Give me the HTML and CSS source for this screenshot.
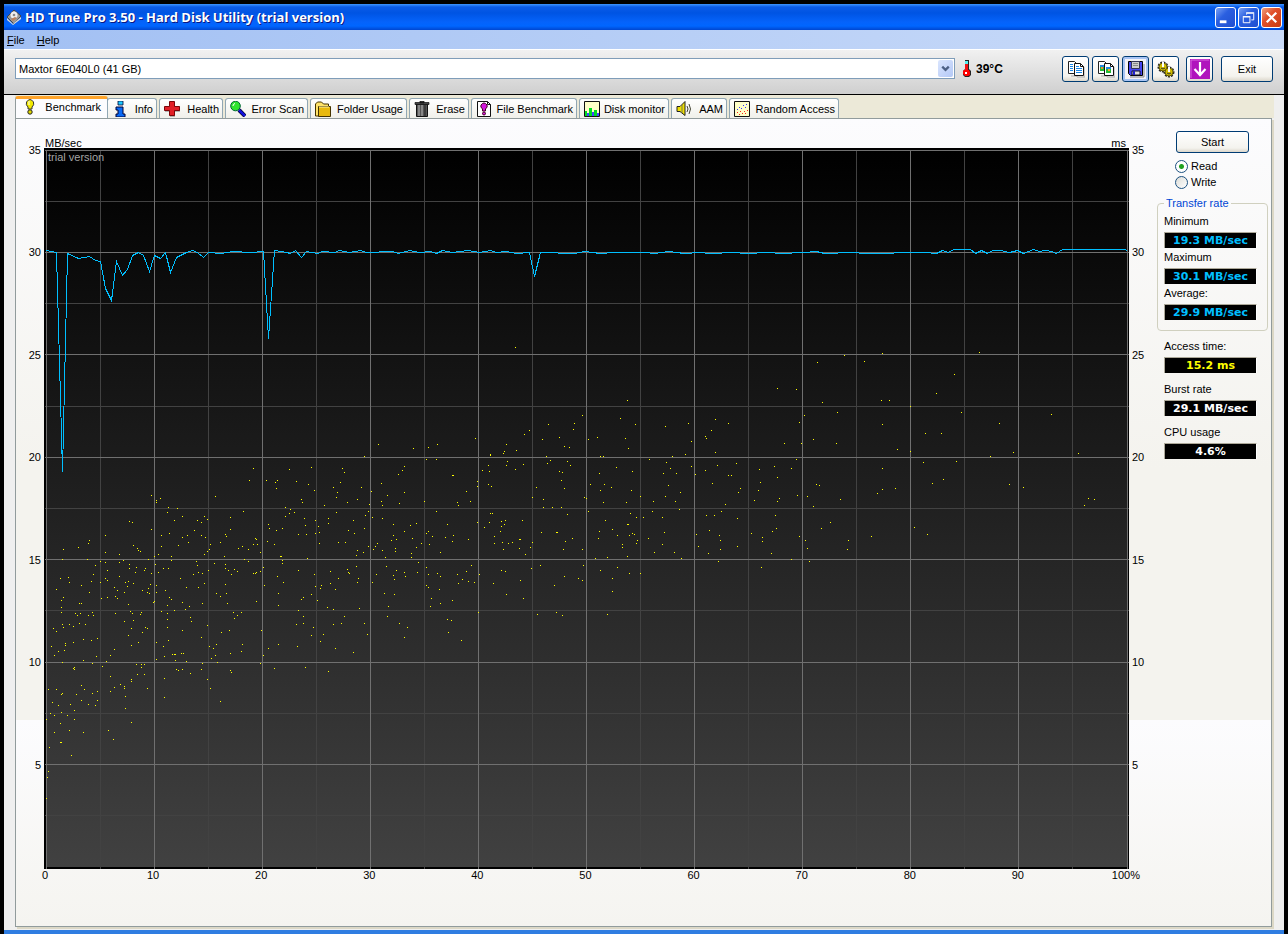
FILE: index.html
```html
<!DOCTYPE html>
<html lang="en">
<head>
<meta charset="utf-8">
<title>HD Tune Pro 3.50 - Hard Disk Utility (trial version)</title>
<link rel="stylesheet" href="styles.css">
</head>
<body>
<div class="window">
  <header class="titlebar">
    <svg class="icon" viewBox="0 0 16 16"><path d="M1 8 8 1l7 6-7 8z" fill="#999" stroke="#444"/><path d="m1 9 6 6 8-7v2l-8 6-6-5z" fill="#ddd"/><circle cx="8" cy="6" r="3.500" fill="#eee"/><circle cx="8" cy="6" r="1.300" fill="#888"/><path d="m5 10 4-2 2 1-4 3z" fill="#b9805d"/></svg>
    <h1 class="title">HD Tune Pro 3.50 - Hard Disk Utility (trial version)</h1>
    <button class="winbtn" aria-label="Minimize"><svg viewBox="0 0 20 20"><path d="M4 13h7v3H4z" fill="#fff"/></svg></button>
    <button class="winbtn" aria-label="Restore"><svg viewBox="0 0 20 20" fill="none" stroke="#fff"><path d="M8 7V5.500h7.500v7H13M7.500 5h8.500" /><path d="M4.500 9.500h7v6h-7zM4 9h8"/></svg></button>
    <button class="winbtn close" aria-label="Close"><svg viewBox="0 0 20 20"><path d="m5 5 10 10M15 5 5 15" stroke="#fff" stroke-width="2.400"/></svg></button>
  </header>
  <nav class="menubar"><button><u>F</u>ile</button><button><u>H</u>elp</button></nav>
  <div class="toolbar">
    <div class="drive">
      <select class="drive-select" aria-label="Drive"><option>Maxtor 6E040L0 (41 GB)</option></select>
      <svg class="drive-arrow" viewBox="0 0 16 18"><path d="m4.500 7 3.500 3.500L11.500 7" fill="none" stroke="#4d6185" stroke-width="2.400"/></svg>
    </div>
    <div class="temp">
      <svg class="thermo" viewBox="0 0 10 18"><path d="M3 0h4v9l2 2v4l-2 2H3l-2-2v-4l2-2z" fill="#222"/><path d="M3 1h3v9H3z" fill="#f01010"/><path d="M3 1h3v3H3z" fill="#5ee"/><path d="M2 10h5l1 2v3l-2 1H3l-2-2v-3z" fill="#f00"/><path d="M3 12h2v2H3z" fill="#fff"/></svg>
      <span>39°C</span>
    </div>
    <div class="tools">
      <button class="xpbtn tool" aria-label="Copy information"><svg viewBox="0 0 18 18"><path d="M4 16h6v1h8V7" fill="none" stroke="#aaa"/><path d="M1.500 1.500h6l2 2v10h-8z" fill="#fff" stroke="#222"/><path d="M7.500 3.500h6l3 3v9h-9z" fill="#fff" stroke="#111"/><path d="M13.500 3.500v3h3" fill="none" stroke="#111"/><path d="M3 4.500h3M3 6.500h3M3 8.500h3M3 10.500h3M9 6.500h3M9 8.500h6M9 10.500h6M9 12.500h6" stroke="#1887e8"/></svg></button>
      <button class="xpbtn tool" aria-label="Copy screenshot"><svg viewBox="0 0 18 18"><path d="M4 16h6v1h8V7" fill="none" stroke="#aaa"/><path d="M1.500 1.500h6l2 2v10h-8z" fill="#fff" stroke="#222"/><path d="M3 5h4v6H3z" fill="#2b3"/><path d="M3 5h4v2H3z" fill="#28d"/><path d="M4 7h2v2H4z" fill="#e83"/><path d="M7.500 3.500h6l3 3v9h-9z" fill="#fff" stroke="#111"/><path d="M13.500 3.500v3h3" fill="none" stroke="#111"/><path d="M9 7h5v6H9z" fill="#2b3"/><path d="M9 7h5v2H9z" fill="#28d"/><path d="M11 9h2v2h-2z" fill="#fa2"/></svg></button>
      <button class="xpbtn tool active" aria-label="Save screenshot"><svg viewBox="0 0 18 18"><path d="M3 17h14V4" fill="none" stroke="#888"/><path d="M1.500 1.500h14v14H3.500l-2-2z" fill="#4646f0" stroke="#000"/><path d="M4.500 1.500h8v7h-8z" fill="#ccc" stroke="#335"/><path d="M6 3.500h5M6 5.500h5" stroke="#888"/><path d="M5 11h8v4H5z" fill="#ddd" stroke="#112"/><path d="M6 11h2v4H6z" fill="#22c"/></svg></button>
      <button class="xpbtn tool" aria-label="Options"><svg viewBox="0 0 18 18"><g fill="none" stroke="#222" stroke-width="2" stroke-dasharray="2 1"><circle cx="6" cy="7" r="4.500"/><circle cx="12" cy="12" r="4.500"/></g><circle cx="6" cy="7" r="4" fill="#d0bd00" stroke="#665c00"/><circle cx="12" cy="12" r="4" fill="#d0bd00" stroke="#665c00"/><path d="M6 2v5M12 7v5" stroke="#fff" stroke-width="2"/><path d="M4 8q2 2 4 0M10 13q2 2 4 0" stroke="#333" fill="none"/></svg></button>
      <button class="xpbtn tool down" aria-label="Minimize to tray"><svg viewBox="0 0 20 20"><path d="M0 0h20v20H0z" fill="#b013bd"/><path d="M1 19V1h18" stroke="#d768df" fill="none"/><path d="M10 3v12M4.500 10l5.500 6 5.500-6" fill="none" stroke="#fff" stroke-width="2.200"/></svg></button>
      <button class="xpbtn exit">Exit</button>
    </div>
  </div>
  <main class="body">
    <div class="tabs" role="tablist">
      <button class="tab t-bench selected" role="tab" aria-selected="true"><svg class="icon" viewBox="0 0 16 16"><path d="M4.500 3q3.500-5 7 0 1 3-1.500 5v2H6V8Q3.500 6 4.500 3z" fill="#f1e900" stroke="#333"/><circle cx="8" cy="13" r="2.200" fill="#e0d800" stroke="#222"/><path d="M7 2v4" stroke="#fff"/></svg>Benchmark</button>
      <button class="tab t-info" role="tab"><svg class="icon" viewBox="0 0 16 16"><path d="M6 0h5v4H6z" fill="#19c8ff" stroke="#003" stroke-width=".8"/><path d="M4 6h7v7h2v3H4v-3h2V9H4z" fill="#0869f5" stroke="#003" /></svg>Info</button>
      <button class="tab t-health" role="tab"><svg class="icon" viewBox="0 0 16 16"><path d="M6 1.500h5v4h5v5h-5v5H6v-5H1v-5h5z" fill="#777"/><path d="M5.500.5h5v5h5v4h-5v5h-5v-5h-5v-4h5z" fill="#e11f26" stroke="#7c0508"/></svg>Health</button>
      <button class="tab t-scan" role="tab"><svg class="icon" viewBox="0 0 16 16"><path d="m9 9 6 6" stroke="#002" stroke-width="4"/><path d="m9 9 6 6" stroke="#11d" stroke-width="2.500"/><circle cx="5.500" cy="5" r="4.800" fill="#2fe52f" stroke="#063"/><path d="M3 5q0-2 2-2.500" stroke="#fff" fill="none"/></svg>Error Scan</button>
      <button class="tab t-folder" role="tab"><svg class="icon" viewBox="0 0 16 16"><path d="M.5 14V3l2-2h4l2 2h5v12h-13z" fill="#ffe36a" stroke="#443300"/><path d="M3.500 5.500h12v10h-12z" fill="#e8b90e" stroke="#443300"/><path d="M4 6h10" stroke="#fff3a0"/></svg>Folder Usage</button>
      <button class="tab t-erase" role="tab"><svg class="icon" viewBox="0 0 16 16"><path d="M2.500 3h11v12.500h-11z" fill="#555" stroke="#111"/><path d="M1 1.500h14v2H1zM6 0h4v2H6z" fill="#444" stroke="#111" stroke-width=".7"/><path d="M5 4v11M8 4v11" stroke="#bbb"/><path d="M11 4v11" stroke="#222"/></svg>Erase</button>
      <button class="tab t-file" role="tab"><svg class="icon" viewBox="0 0 16 16"><path d="M1.500.5h10l3 3v12h-13z" fill="#fff" stroke="#111"/><path d="M11.500.5v3h3" fill="none" stroke="#111"/><path d="M5 4q3-4 6 0 1 2-1.500 4v2h-3V8Q4 6 5 4z" fill="#d216dc" stroke="#402"/><circle cx="8" cy="12.500" r="1.500" fill="#d216dc" stroke="#402"/></svg>File Benchmark</button>
      <button class="tab t-monitor" role="tab"><svg class="icon" viewBox="0 0 16 16"><path d="M.5.500h15v15H.5z" fill="#ffffc8" stroke="#111"/><path d="M1 10h2v5H1zM5 7h3v8H5zM10 9h3v6h-3z" fill="#0d2"/><path d="M3 12h2v3H3zM8 11h2v4H8zM13 12h2v3h-2z" fill="#44f"/></svg>Disk monitor</button>
      <button class="tab t-aam" role="tab"><svg class="icon" viewBox="0 0 16 16"><path d="M1 5.500h3l5-5v14l-5-4H1z" fill="#f0e000" stroke="#222"/><path d="M6 4v8" stroke="#775"/><path d="M11 5q2 3 0 6M13 3q3 5 0 10" fill="none" stroke="#443"/></svg>AAM</button>
      <button class="tab t-random" role="tab"><svg class="icon" viewBox="0 0 16 16"><path d="M.5.500h15v15H.5z" fill="#ffffc8" stroke="#111"/><path d="M3 11h1v1H3zM5 13h1v1H5zM6 10h1v1H6zM8 12h1v1H8zM10 10h1v1h-1zM11 12h1v1h-1zM13 9h1v1h-1z" fill="#f22"/><path d="M3 8h1v1H3zM5 6h1v1H5zM7 7h1v1H7zM9 4h1v1H9zM12 3h1v1h-1zM11 6h1v1h-1z" fill="#33f"/></svg>Random Access</button>
    </div>
    <section class="panel" role="tabpanel">
      <div class="chart">
        <div class="units"><span>MB/sec</span><span>ms</span></div>
        <div class="axis-y left"><span>35</span><span>30</span><span>25</span><span>20</span><span>15</span><span>10</span><span>5</span><span></span></div>
        <div class="plot">
          <svg id="plot" viewBox="0 0 1085 721" preserveAspectRatio="none" role="img" aria-label="Transfer rate and access time">
            <defs><linearGradient id="shade" x2="0" y2="1"><stop offset="0" stop-color="#000"/><stop offset="1" stop-color="#414141"/></linearGradient></defs>
            <rect width="1085" height="721" fill="#000"/>
            <rect x="2" y="2" width="1081" height="717" fill="url(#shade)"/>
            <path id="minor" class="minor"/>
            <path id="major" class="major"/>
            <path id="dots" class="dots"/>
            <polyline id="rate" class="rate"/>
          </svg>
          <span class="trial">trial version</span>
        </div>
        <div class="axis-y right"><span>35</span><span>30</span><span>25</span><span>20</span><span>15</span><span>10</span><span>5</span><span></span></div>
        <div class="axis-x"><span>0</span><span>10</span><span>20</span><span>30</span><span>40</span><span>50</span><span>60</span><span>70</span><span>80</span><span>90</span><span>100%</span></div>
      </div>
      <aside class="side">
        <button class="xpbtn start">Start</button>
        <div class="modes">
          <label><input type="radio" name="mode" checked>Read</label>
          <label><input type="radio" name="mode">Write</label>
        </div>
        <fieldset class="rates">
          <legend>Transfer rate</legend>
          <div class="stat"><span>Minimum</span><output class="cyan">19.3 MB/sec</output></div>
          <div class="stat"><span>Maximum</span><output class="cyan">30.1 MB/sec</output></div>
          <div class="stat"><span>Average:</span><output class="cyan">29.9 MB/sec</output></div>
        </fieldset>
        <div class="others">
          <div class="stat"><span>Access time:</span><output class="yellow">15.2 ms</output></div>
          <div class="stat"><span>Burst rate</span><output>29.1 MB/sec</output></div>
          <div class="stat"><span>CPU usage</span><output>4.6%</output></div>
        </div>
      </aside>
    </section>
  </main>
</div>
<script src="chart.js"></script>
</body>
</html>
```
FILE: styles.css
```css
* { box-sizing: border-box; }
body {
  margin: 0;
  background: #000;
  color: #000;
  font: 11px/14px "Liberation Sans", Arial, sans-serif;
}
button, select, input { font: inherit; color: inherit; margin: 0; }
button { padding: 0; border: 0; background: none; }
.icon { width: 16px; height: 16px; flex: none; }

.window {
  display: flex;
  flex-direction: column;
  height: 100vh;
  min-height: 640px;
  padding: 4px 4px 0;
}
.titlebar {
  display: flex;
  align-items: center;
  gap: 2px;
  height: 26px;
  flex: none;
  padding: 0 2px;
  background: linear-gradient(#3d95ff 0, #0a5be8 3px, #0054e3 9px, #0563fb 18px, #0066ff 22px, #0046d0 26px);
}
.title {
  flex: 1;
  margin: 0 0 0 1px;
  color: #fff;
  font: bold 13px/20px "Open Sans", sans-serif;
  text-shadow: 1px 1px #0a1883;
}
.winbtn {
  width: 21px;
  height: 21px;
  border: 1px solid #fff;
  border-radius: 3px;
  background: linear-gradient(135deg, #7aa2f5, #2a5fe0 40%, #1f4fd0);
}
.winbtn svg { display: block; width: 19px; height: 19px; }
.winbtn.close { background: linear-gradient(135deg, #f0a080, #e1502a 40%, #c93a10); }

.menubar {
  display: flex;
  gap: 12px;
  height: 20px;
  flex: none;
  padding: 0 3px;
  align-items: center;
  border-bottom: 1px solid #fff;
  background: linear-gradient(90deg, #a2c0f3, #cbdcf9);
}
.toolbar {
  display: flex;
  align-items: center;
  height: 45px;
  flex: none;
  padding: 0 11px 7px;
  background: linear-gradient(#f1f1f1, #cfcfcf);
  border-bottom: 1px solid #000;
}
.drive { position: relative; flex: 1; }
.drive-select {
  display: block;
  appearance: none;
  width: 100%;
  height: 21px;
  padding: 0 20px 0 3px;
  border: 1px solid #7f9db9;
  border-radius: 0;
  background: #fff;
}
.drive-arrow {
  position: absolute;
  right: 2px;
  top: 2px;
  width: 15px;
  height: 17px;
  border-radius: 2px;
  background: linear-gradient(135deg, #dbe6fe, #b3c8f6);
  pointer-events: none;
}
.temp {
  display: flex;
  align-items: center;
  gap: 4px;
  width: 107px;
  padding-left: 7px;
  font-weight: bold;
  font-size: 12px;
}
.thermo { width: 10px; height: 18px; }
.tools { display: flex; gap: 3px; }
.xpbtn {
  border: 1px solid #003c74;
  border-radius: 3px;
  background: linear-gradient(#fff, #f4f3ee 80%, #dcd7cb);
}
.tool {
  display: grid;
  place-items: center;
  width: 27px;
  height: 26px;
}
.tool svg { width: 18px; height: 18px; }
.tool.active { background: #f4f3f8; box-shadow: inset 0 0 0 2px #a8c4f4; }
.tool.down { margin-left: 4px; }
.tool.down svg { width: 20px; height: 20px; }
.exit { width: 52px; height: 26px; margin-left: 5px; }

.body {
  flex: 1;
  min-height: 0;
  display: flex;
  flex-direction: column;
  padding: 0 12px 3px 11px;
  background: #efefef;
  border-bottom: 4px solid #2f7de1;
}
.tabs {
  display: flex;
  align-items: flex-end;
  gap: 2px;
  height: 23px;
  flex: none;
  margin-right: -2px;
  padding-top: 1px;
  background: #ece9d8;
}
.tab {
  display: flex;
  align-items: center;
  justify-content: space-between;
  height: 20px;
  padding: 0 3px 0 4px;
  border: 1px solid #91a7b4;
  border-bottom: 0;
  border-radius: 3px 3px 0 0;
  background: linear-gradient(#fff, #f0f0ea);
  white-space: nowrap;
}
.tab.selected {
  height: 22px;
  padding: 0 6px 4px;
  margin-right: -3px;
  border-color: #919b9c;
  border-top: 3px solid #ffa42b;
  background: #fcfcfe;
}
.t-bench { width: 93px; }
.t-info { width: 50px; }
.t-health { width: 64px; }
.t-scan { width: 83px; }
.t-folder { width: 97px; }
.t-erase { width: 60px; }
.t-file { width: 106px; }
.t-monitor { width: 90px; }
.t-aam { width: 56px; }
.t-random { width: 110px; }

.panel {
  flex: 1;
  min-height: 0;
  display: flex;
  padding-right: 3px;
  border: 1px solid #919b9c;
  box-shadow: 2px 2px #dcd8c6;
  background: linear-gradient(#fcfcfe, #f4f3ee 350px, #f4f3ee 601px, #fcfcfe 601px, #f5f4f0);
}
.chart {
  flex: 1;
  min-width: 0;
  display: grid;
  grid-template-columns: 25px minmax(0, 1fr) 25px;
  grid-template-rows: 11px minmax(0, 1fr) 12px;
  column-gap: 3px;
  padding: 18px 0 45px;
  line-height: 12px;
}
.units {
  grid-column: 2;
  display: flex;
  justify-content: space-between;
  padding: 0 3px 0 1px;
}
.axis-y {
  grid-row: 2;
  display: flex;
  flex-direction: column;
  justify-content: space-between;
  margin: -4px 0;
}
.axis-y span { height: 12px; }
.axis-y.left { grid-column: 1; text-align: right; }
.axis-y.right { grid-column: 3; }
.plot { grid-column: 2; grid-row: 2; position: relative; }
.plot svg { display: block; width: 100%; height: 100%; shape-rendering: crispEdges; }
.trial { position: absolute; left: 4px; top: 3px; color: #a4a4a4; }
.minor, .major, .dots, .rate { fill: none; stroke-width: 1; }
.minor { stroke: #424242; }
.major { stroke: #707070; }
.dots { stroke: #ff0; }
.rate { stroke: #00bfff; }
.axis-x {
  grid-column: 2;
  grid-row: 3;
  display: flex;
  justify-content: space-between;
  margin: 0 -12px 0 -14px;
}
.axis-x span { width: 30px; text-align: center; }

.side { width: 111px; flex: none; padding-top: 12px; }
.start { display: block; width: 73px; height: 22px; margin: 0 0 5px 19px; }
.modes { padding-left: 18px; margin-bottom: 6px; }
.modes label { display: flex; align-items: center; gap: 3px; height: 16px; }
.modes input {
  appearance: none;
  width: 13px;
  height: 13px;
  border: 1px solid #1c5180;
  border-radius: 50%;
  background: linear-gradient(135deg, #dcdcd7, #fff);
}
.modes input:checked { background: radial-gradient(circle, #21a121 0 2px, #fff 3px); }
.rates {
  margin: 0;
  min-width: 0;
  padding: 4px 6px 10px;
  border: 1px solid #d0d0bf;
  border-radius: 4px;
}
.rates legend { padding: 0 2px; color: #0046d5; }
.stat span { display: block; }
.stat output {
  display: block;
  width: 93px;
  height: 16px;
  margin-top: 4px;
  border: solid #aca899;
  border-width: 1px 0 0 1px;
  border-right: 1px solid #fff;
  background: #000;
  color: #fff;
  font: bold 11px/15px "DejaVu Sans", sans-serif;
  text-align: center;
}
.rates .stat + .stat { margin-top: 2px; }
.others { display: grid; gap: 9px; padding: 8px 0 0 7px; }
.stat .cyan { color: #00bfff; }
.stat .yellow { color: #ff0; }
```
FILE: chart.js
```js
// Grid lines: a major line every 10 % / 5 units, a minor line between each.
const W = 1085, H = 721;
let major = "", minor = "";
for (let i = 0; i <= 20; i++) {
  const x = Math.floor(2 + 54.05 * i) + 0.5;
  const d = `M${x} 2V${H}`;
  if (i % 2) minor += d; else major += d;
}
for (let i = 0; i <= 13; i++) {
  const y = Math.floor(2.1 + 51.2 * i) + 0.5;
  const d = `M1 ${y}H${W}`;
  if (i % 2) minor += d; else major += d;
}
document.getElementById("minor").setAttribute("d", minor);
document.getElementById("major").setAttribute("d", major);

// Access-time samples, in blocks: [left, top, "x y x y ..."], in thirds of a plot unit.
const samples = [
  [-14, 82, "670 715 778 718 844 712"],
  [-14, 332, `364 46 391 55 379 62 379 67 415 82 412 97 442 85 457 109 433 121 523 109 532 118 502 121 514 127 556 49 640 94 601 112
    298 124 307 127 226 166 364 148 394 166 418 160 457 172 472 166 493 151 514 166 526 172 475 187 445 196 394 199 601 148 586 163 589 169
    100 208 145 202 175 190 178 181 97 238 172 238 226 217 268 223 310 196 322 205 325 211 331 214 385 223 373 229 424 229 424 241 355 238
    211 244 226 247 268 247 280 241 298 253 298 265 319 262 316 277 343 271 346 265 364 280 376 253 400 265 385 277 415 265 499 244 502 256 505 277 517 280 490 283
    523 223 532 214 538 208 541 193 571 187 583 229 553 250 586 253 586 265 535 271 595 271 604 283 613 268 622 274 625 205 637 199 655 208 643 238 655 244
    670 193 682 193 676 175 679 178 691 217 691 274 670 280 676 280 679 277 700 262 712 184 733 193 718 145 715 133 739 151 757 145 739 25 736 7 742 1 709 1 658 1 799 4 835 13 853 31
    814 58 817 67 766 82 781 88 778 100 793 97 766 109 823 115 826 136 829 163 805 163 856 121 865 139 868 157 856 160 868 190 883 76 895 115 895 130
    751 229 754 229 757 241 757 250 832 235 805 271 853 283 856 319 871 325 874 316 742 289 760 307 703 316 745 340 844 343 820 352 814 358 862 361 745 376 805 391 892 382
    91 295 115 292 118 307 79 328 154 316 196 256 190 283 184 304 178 337 100 352 94 361 94 382 149 370 154 370 94 397 136 400 151 400 142 406 187 397 190 406 175 406
    211 307 226 295 232 301 232 271 268 289 286 307 295 304 292 319 310 310 253 322 262 331 283 337 214 355 232 352 256 349 262 355 295 373 337 331 355 325 361 313 352 337 358 340 379 316 379 337 406 331 451 295 469 322 505 322 523 310
    418 352 424 358 412 376 373 364 370 367 394 394 433 391 466 388 478 379 457 367 517 370 559 340 571 349 589 340 586 313 592 370 679 364 694 451
    70 445 79 454 97 433 100 442 118 433 130 439 148 430 166 433 256 400 301 394 307 400 283 424 310 421 331 403 334 397 412 400 412 418 412 442 304 445 337 457 346 442 352 445 295 466 481 412 484 424 532 436 457 451
    610 397 613 415 622 406 634 397 598 451 574 457 514 472 415 481 400 499 379 487 160 478 184 481 202 475 130 487 106 490 106 496 64 499 103 511 85 514 73 526 199 529 241 526 253 508 304 496 325 487
    97 547 160 541 187 550 229 544 217 559 133 562 130 565 133 568 319 553 334 553 343 553 334 562 403 529 427 523 433 523 436 523 454 520 460 520 379 538 436 541 469 544 439 568 445 571 457 568 481 580 517 550 514 568 544 535 556 526 550 505 538 499 559 493 562 547 601 520 637 493 634 514 715 505 700 526 745 493 691 550 733 565 802 499 799 433 820 409 820 430 850 442 844 466 880 463 871 484 826 562 895 574
    322 583 343 583 241 589 304 598 304 604 403 595 532 598 601 571 604 577 541 625 571 664 403 652 352 625 271 613 283 619 283 625 253 622 241 634 286 649 286 685 304 727
    55 628 79 628 94 643 97 640 67 667 85 676 154 616 163 628 139 643 187 640 202 634 154 661 202 661 196 676 175 673 121 673 133 691 94 697 61 700 73 706 112 706 133 718 49 718 91 730 118 751 160 757 73 757 91 787 94 787 235 751 250 778 58 802 124 826 55 874 52 892 49 955`],
  [286, 252, `892 1 757 46 871 55 733 70 655 73 916 73 730 88 598 91 583 103 688 112 802 112 436 115 637 118 775 118 886 115 145 133 322 133 250 145 295 142 529 133 703 139 718 142 895 145 523 154 520 160 559 151 481 163 481 166 103 169 649 169 811 169 820 169
    289 178 319 178 661 181 532 184 652 190 712 184 721 196 475 196 529 196 580 193 37 205 43 217 223 199 217 211 205 223 457 211 478 214 556 208 688 214 697 217 859 202 907 214 808 220 367 226 370 226 31 247 154 250 442 244 475 253 484 259 442 259 694 241 781 253 823 253 844 262 10 262 94 262 22 277 124 274 223 277 409 274 619 262 703 265 811 271 904 271 19 292 82 298 172 286 607 292 763 292 769 295 931 289 958 178
    52 307 118 313 154 304 157 316 208 310 283 304 382 307 421 304 385 316 640 298 820 307 889 307 640 322 667 322 694 322 19 337 115 334 319 334 775 334 106 346 127 352 157 355 481 340 487 340 712 343 901 340 919 352 940 352 70 361 190 373 241 376 259 370 352 373 442 367 478 367 526 361 514 364 577 361 826 361 523 373 514 379 463 382 892 373 895 373 55 391 103 385 73 400 223 394 295 394 289 400 511 394 634 397 679 397 682 397 808 394 847 388 898 406 907 400 913 403 862 406 955 415
    190 406 199 418 184 421 247 415 307 409 346 412 370 406 367 424 415 418 493 409 568 418 571 418 727 415 805 415 25 427 46 427 115 439 136 439 142 430 130 448 274 430 298 433 493 430 517 427 535 430 547 427 607 427 706 424 877 433 877 442 922 421 919 430 82 451 100 457 157 451 196 445 196 454 259 442 331 457 520 448 568 445 601 442 586 463 700 448 757 448 79 466 166 472 244 460 244 472 796 475 832 472 892 469
    79 499 52 508 55 517 58 520 1 514 265 487 169 499 289 502 424 496 631 496 760 496 604 505 862 502 199 511 190 526 223 517 226 529 262 517 139 523 295 523 322 520 331 529 382 523 409 514 448 523 514 511 526 514 703 529 811 511 898 520 931 520 25 535 85 535 82 547 1 550 127 547 193 538 289 556 295 562 385 550 397 538 415 544 433 547 490 550 571 541 673 556 745 535 757 541 847 535 16 568 328 568 163 580 193 583 529 583 847 574 304 595 367 601 580 595 10 628 88 625 175 619 301 619 331 610
    43 649 34 670 10 673 103 670 172 649 208 670 232 682 352 658 364 661 445 637 622 643 679 637 697 646 832 643 112 703 223 712 355 697 394 721 16 745 70 757`],
  [471, 199, "1 1"],
  [596, 182, `613 76 727 70 1018 67 532 97 673 94 943 133 412 175 469 178 889 190 547 217 724 211 748 211 811 229 592 247 964 247 493 256 226 268 145 280 265 280 76 289 478 277 727 283 1078 280 1234 253 214 301 196 319 199 325 154 334 520 328 433 340 484 340 589 340 856 310 904 310 772 358 811 364 226 367 136 373 97 379 1051 379 1120 367 1315 370
    28 388 79 397 91 415 154 409 232 406 289 400 196 421 166 433 70 430 109 430 265 436 274 436 358 418 403 409 454 415 469 388 412 442 361 457 217 460 85 466 301 475 295 487 121 487 76 499 1 499 355 481 472 496 529 463 538 466 502 499 601 508 727 415 727 478 712 490 766 475 850 397 949 394 910 448 877 460 1108 463 1150 472 1345 505 1363 508 1333 526
    40 514 106 514 343 511 418 505 412 514 256 523 520 529 118 538 37 544 10 562 67 562 199 556 223 556 244 544 292 565 406 556 571 577 73 607 25 625 67 643 43 667 103 667 124 685 208 601 169 613 238 616 241 631 175 649 241 658 205 670 292 649 235 694 334 610 367 622 367 634 397 604 409 595 478 619 394 670 454 688 364 712 544 595 496 631 502 655 508 694 625 631 622 658 694 619 823 592 862 613 1 730`]
];
let dots = "";
for (const [left, top, list] of samples) {
  const n = list.trim().split(/\s+/).map(Number);
  for (let i = 0; i < n.length; i += 2) {
    dots += `M${left + Math.floor(n[i] / 3)} ${top + Math.floor(n[i + 1] / 3) + 0.5}h1`;
  }
}
document.getElementById("dots").setAttribute("d", dots);

// Transfer rate line.
const rate = [
  [2, 102], [12, 104], [18, 323], [23, 105], [34, 110], [45, 108], [51, 112], [56, 113], [61, 140], [67, 152], [72, 113],
  [78, 127], [83, 121], [88, 107], [94, 104], [99, 107], [105, 123], [110, 107], [116, 110], [121, 104], [126, 124], [132, 109],
  [142, 104], [148, 102], [153, 104], [159, 109], [164, 104], [176, 105], [189, 103], [206, 104], [219, 103], [224, 190], [230, 102],
  [242, 104], [246, 105], [251, 102], [257, 109], [262, 103], [273, 105], [278, 103], [290, 104], [295, 102], [305, 104], [316, 102],
  [322, 104], [348, 103], [354, 105], [365, 102], [375, 104], [386, 103], [392, 105], [398, 102], [408, 104], [424, 102], [435, 104],
  [446, 102], [452, 104], [462, 103], [472, 105], [485, 104], [490, 128], [496, 104], [530, 105], [540, 103], [556, 105], [570, 104],
  [600, 104], [610, 105], [624, 103], [640, 105], [655, 104], [665, 105], [690, 104], [700, 105], [725, 104], [735, 105], [760, 104],
  [772, 103], [780, 105], [808, 104], [820, 105], [880, 104], [892, 105], [898, 102], [904, 104], [909, 101], [926, 101], [931, 105],
  [937, 102], [943, 105], [948, 102], [956, 102], [965, 104], [973, 102], [979, 105], [989, 101], [995, 103], [1001, 102], [1007, 103],
  [1012, 105], [1018, 101], [1080, 101], [1083, 102]
];
document.getElementById("rate").setAttribute("points", rate.map(([x, y]) => `${x + 0.5},${y + 0.5}`).join(" "));
```
